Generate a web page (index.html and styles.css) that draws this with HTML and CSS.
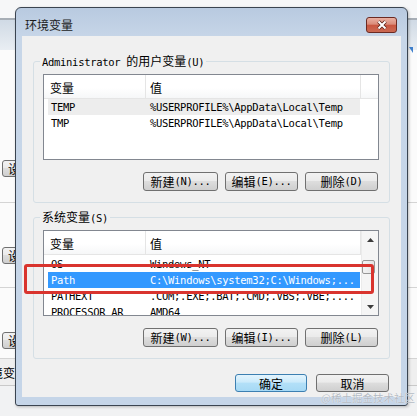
FILE: index.html
```html
<!DOCTYPE html>
<html lang="zh-CN">
<head>
<meta charset="utf-8">
<title>环境变量</title>
<link rel="stylesheet" href="styles.css">
</head>
<body>
<div class="bgwin">
  <div class="bg-top"></div>
  <div class="bg-cap"></div>
  <div class="bg-sec s1"><div class="bgbtn">设置(T)...</div></div>
  <div class="bg-sec s2"><div class="bgbtn">设置(E)...</div></div>
  <div class="bg-sec s3"><div class="bgbtn">设置(S)...</div></div>
  <div class="bg-sec s4"><span class="bg-text">环境变量(N)...</span></div>
</div>
<div class="bg-mark"></div>

<div class="dialog">
  <div class="titlebar">
    <span class="title">环境变量</span>
    <div class="close">
      <svg width="12" height="10" viewBox="0 0 12 10"><path d="M2.5 1.5 L9.5 8.5 M9.5 1.5 L2.5 8.5" stroke="#5a2016" stroke-width="3.6" fill="none"/><path d="M2.5 1.5 L9.5 8.5 M9.5 1.5 L2.5 8.5" stroke="#fff" stroke-width="2" fill="none"/></svg>
    </div>
  </div>
  <div class="client">
    <fieldset class="group">
      <legend><span class="m">Administrator </span>的用户变量<span class="m">(U)</span></legend>
      <div class="list">
        <div class="lmain">
          <div class="lhead"><div class="hc c1">变量</div><div class="hc c2">值</div><div class="hc rest"></div></div>
          <div class="lbody">
            <div class="row hl m"><div class="c1">TEMP</div><div class="c2">%USERPROFILE%\AppData\Local\Temp</div></div>
            <div class="row m"><div class="c1">TMP</div><div class="c2">%USERPROFILE%\AppData\Local\Temp</div></div>
          </div>
        </div>
      </div>
      <div class="btns">
        <div class="btn w75">新建<span class="m">(N)...</span></div>
        <div class="btn w73">编辑<span class="m">(E)...</span></div>
        <div class="btn w73">删除<span class="m">(D)</span></div>
      </div>
    </fieldset>

    <fieldset class="group">
      <legend>系统变量<span class="m">(S)</span></legend>
      <div class="list">
        <div class="lmain">
          <div class="lhead"><div class="hc c1">变量</div><div class="hc c2">值</div></div>
          <div class="lbody sys">
            <div class="row m"><div class="c1">OS</div><div class="c2">Windows_NT</div></div>
            <div class="row sel m"><div class="c1">Path</div><div class="c2">C:\Windows\system32;C:\Windows;...</div></div>
            <div class="row m"><div class="c1">PATHEXT</div><div class="c2">.COM;.EXE;.BAT;.CMD;.VBS;.VBE;....</div></div>
            <div class="row m"><div class="c1">PROCESSOR_AR</div><div class="c2">AMD64</div></div>
          </div>
        </div>
        <div class="vscroll">
          <div class="sb-btn"><svg width="7" height="4" viewBox="0 0 7 4"><path d="M0 4 L3.5 0 L7 4Z" fill="#3c3c3c"/></svg></div>
          <div class="sb-track"><div class="thumb"></div></div>
          <div class="sb-btn"><svg width="7" height="4" viewBox="0 0 7 4"><path d="M0 0 L3.5 4 L7 0Z" fill="#3c3c3c"/></svg></div>
        </div>
      </div>
      <div class="btns">
        <div class="btn w75">新建<span class="m">(W)...</span></div>
        <div class="btn w73">编辑<span class="m">(I)...</span></div>
        <div class="btn w73">删除<span class="m">(L)</span></div>
      </div>
    </fieldset>

    <div class="dlg-btns">
      <div class="btn def w72">确定</div>
      <div class="btn w73">取消</div>
    </div>
  </div>
</div>

<div class="redbox"></div>
<div class="wm">@稀土掘金技术社区</div>
</body>
</html>
```

FILE: styles.css
```css
* { box-sizing: border-box; }
html, body { margin: 0; padding: 0; }
body {
  width: 417px;
  height: 416px;
  overflow: hidden;
  position: relative;
  background: #f1f2f3;
  font-family: "Noto Sans CJK SC", "Noto Sans", sans-serif;
  font-size: 12px;
  color: #000;
}
.m {
  font-family: "DejaVu Sans Mono", "Noto Sans CJK SC", monospace;
  font-size: 10.5px;
  letter-spacing: -0.3px;
}

/* background window */
.bgwin { display: flex; flex-direction: column; width: 417px; }
.bg-top { height: 20px; background: #f6f7f8; border-bottom: 2px solid #a7aeb6; }
.bg-cap { height: 30px; background: linear-gradient(#d0dae5, #e9eef3); }
.bg-sec { background: #fbfbfb; border-bottom: 1px solid #d4d4d4; }
.bg-sec.s1 { height: 153px; padding-top: 110px; }
.bg-sec.s2 { height: 85px; padding-top: 44px; }
.bg-sec.s3 { height: 71px; padding-top: 44px; }
.bg-sec.s4 { height: 27px; padding-top: 7px; background: #efefef; border-bottom: 1px solid #c9c9c9; overflow: hidden; }
.bgbtn {
  margin-left: 2px;
  width: 90px;
  height: 17px;
  padding-left: 5px;
  line-height: 15px;
  border: 1px solid #707070;
  border-radius: 3px;
  background: linear-gradient(#f2f2f2, #ebebeb 45%, #dddddd 50%, #cfcfcf);
  white-space: nowrap;
}
.bg-text { display: block; margin-left: -21px; line-height: 14px; white-space: nowrap; }
.bg-mark {
  position: absolute; left: 409px; top: 47px;
  width: 0; height: 0;
  border-left: 4px solid transparent;
  border-top: 6px solid #3e7fcd;
}

/* dialog */
.dialog {
  position: absolute;
  left: 15px; top: 7px;
  width: 393px; height: 399px;
  border: 1px solid #3a4450;
  border-radius: 6px 6px 3px 3px;
  background: linear-gradient(#b8cae0 0, #c7d6e8 30px, #c5d5e8 100%);
  padding: 0 6px 8px;
  display: flex;
  flex-direction: column;
  box-shadow: 1px 1px 3px rgba(0,0,0,.25);
}
.titlebar {
  height: 28px;
  padding: 5px 4px 0 3px;
  display: flex;
  align-items: center;
  justify-content: space-between;
}
.title { line-height: 16px; color: #1b1b1b; }
.close {
  width: 31px; height: 16px;
  border: 1px solid #6b2a22;
  border-radius: 3px;
  background: linear-gradient(#eab0a2, #da8b79 45%, #c9553f 50%, #cb6a53);
  display: flex; align-items: center; justify-content: center;
}
.client {
  flex: 1;
  background: #f0f0f0;
  padding: 0 11px;
  display: flex;
  flex-direction: column;
}

/* group boxes */
.group {
  margin: 18px 0 0;
  padding: 6px 10px 11px 9px;
  border: 1px solid #d5dfe5;
  border-radius: 3px;
  min-width: 0;
}
.group + .group { margin-top: 7px; }
.group legend {
  padding: 0 2px;
  margin-left: -3px;
  height: 14px;
  line-height: 14px;
  white-space: nowrap;
}

/* list view */
.list {
  height: 86px;
  border: 1px solid #828790;
  background: #fff;
  display: flex;
}
.lmain { flex: 1; min-width: 0; display: flex; flex-direction: column; }
.lhead {
  height: 24px;
  display: flex;
  border-bottom: 1px solid #e5e5e5;
  background: linear-gradient(#ffffff, #ffffff 55%, #f6f7f8);
  flex: none;
}
.hc { height: 23px; padding-top: 3px; line-height: 20px; white-space: nowrap; }
.hc.c1 { width: 102px; padding-left: 6px; border-right: 1px solid #e5e5e5; }
.hc.c2 { width: 215px; padding-left: 4px; border-right: 1px solid #e5e5e5; }
.hc.rest { flex: 1; }
.lbody { flex: 1; overflow: hidden; }
.lbody.sys { padding-top: 1px; }
.row {
  display: flex;
  height: 16px;
  line-height: 16px;
  margin-left: 4px;
  width: 312px;
  white-space: nowrap;
}
.row .c1 { width: 99px; padding-left: 3px; overflow: hidden; }
.row .c2 { width: 213px; padding-left: 3px; overflow: hidden; }
.row.hl { background: #ededed; }
.row.sel { background: #3399ff; color: #fff; }

/* scrollbar */
.vscroll {
  width: 17px;
  flex: none;
  display: flex;
  flex-direction: column;
  background: #f5f5f5;
  border-left: 1px solid #ebebeb;
}
.sb-btn { height: 17px; display: flex; align-items: center; justify-content: center; }
.sb-track { flex: 1; }
.thumb {
  margin-top: 12px;
  width: 13px; height: 14px;
  border: 1px solid #979797;
  border-radius: 2px;
  background: linear-gradient(90deg, #f4f4f4, #e3e3e3);
}

/* buttons */
.btns { display: flex; justify-content: flex-end; gap: 7px; margin-top: 12px; padding-right: 1px; }
.dlg-btns { display: flex; justify-content: flex-end; gap: 9px; margin-top: 15px; padding-right: 1px; }
.btn {
  height: 19px;
  border: 1px solid #707070;
  border-radius: 3px;
  background: linear-gradient(#f2f2f2, #ebebeb 45%, #dddddd 50%, #cfcfcf);
  display: flex;
  align-items: center;
  justify-content: center;
  line-height: 17px;
  white-space: nowrap;
}
.dlg-btns .btn { height: 18px; }
.btn.def {
  border-color: #3c7fb1;
  background: linear-gradient(#e3f4fd, #cbeafb 45%, #b3e0f8 50%, #a6d9f5);
}
.w72 { width: 72px; }
.w73 { width: 73px; }
.w75 { width: 75px; }

/* overlays */
.redbox {
  position: absolute;
  left: 24px; top: 264px;
  width: 350px; height: 30px;
  border: 3px solid #d9342e;
  border-radius: 3px;
}
.wm {
  position: absolute;
  right: 2px; top: 391px;
  font-size: 10.5px;
  line-height: 14px;
  color: #b4bbc4;
  text-shadow: 0 0 1px #fff;
  white-space: nowrap;
}
```
